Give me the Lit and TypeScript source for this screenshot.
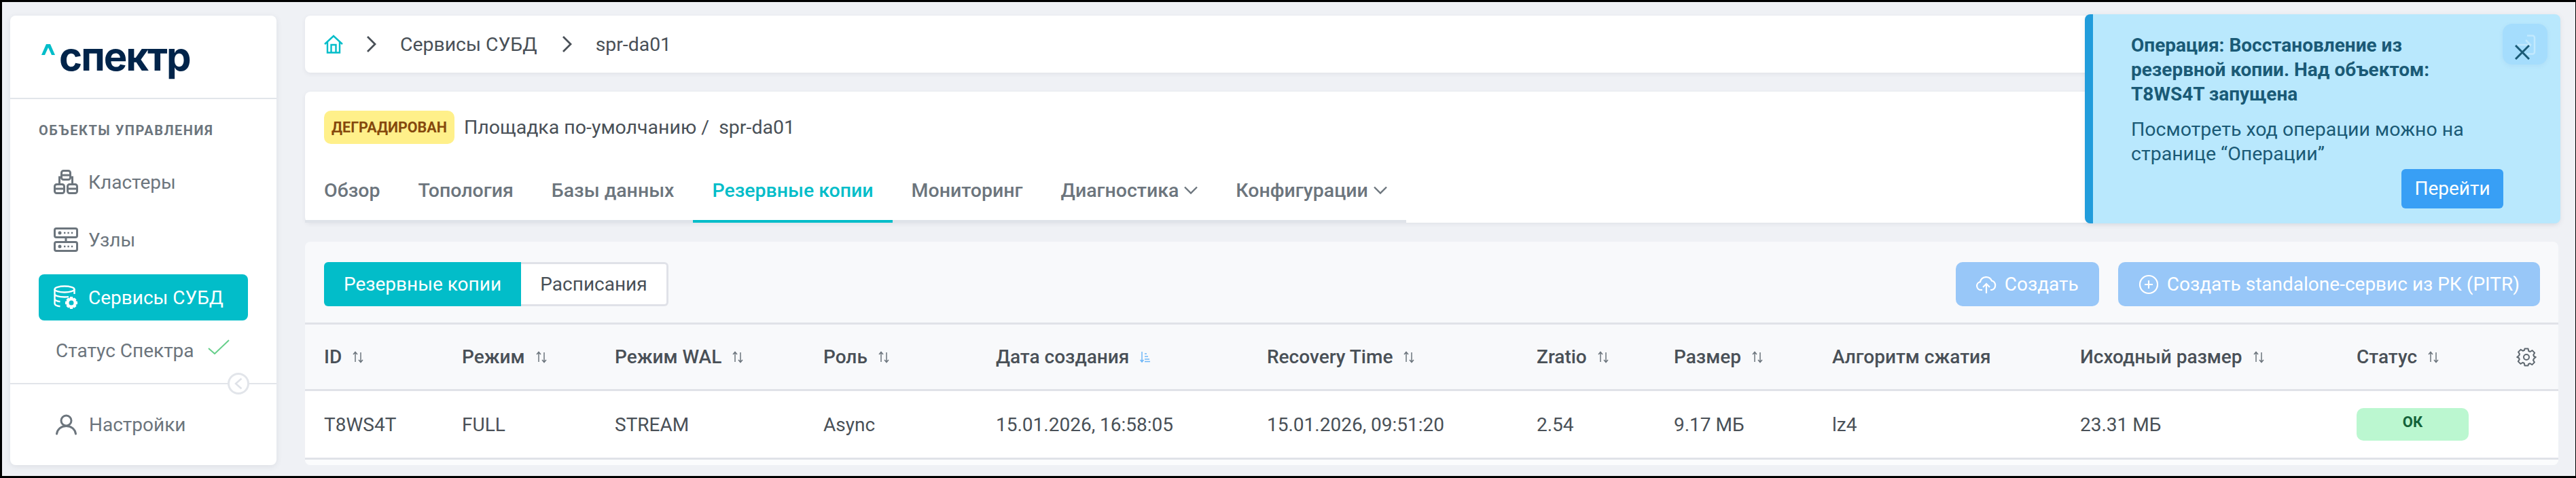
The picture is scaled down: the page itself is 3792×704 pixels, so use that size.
import { LitElement, css, html, svg } from 'lit'
import { customElement } from 'lit/decorators.js'

const sortIcon = (active = false) => html`
  <svg class="sort ${active ? 'active' : ''}" width="16" height="18" viewBox="0 0 16 18" fill="none" stroke="currentColor" stroke-width="1.5">
    ${active
      ? svg`<path d="M3 1v15M0.5 13l2.5 3 2.5-3"/><path d="M7 4h3M7 8h5M7 12h7M7 15.5h8"/>`
      : svg`<path d="M4 16V1.5M1 5l3-3.5L7 5"/><path d="M12 2v14.5M9 13l3 3.5 3-3.5"/>`}
  </svg>
`

const columns = [
  { title: 'ID', value: 'T8WS4T', sort: true },
  { title: 'Режим', value: 'FULL', sort: true },
  { title: 'Режим WAL', value: 'STREAM', sort: true },
  { title: 'Роль', value: 'Async', sort: true },
  { title: 'Дата создания', value: '15.01.2026, 16:58:05', sort: true, active: true },
  { title: 'Recovery Time', value: '15.01.2026, 09:51:20', sort: true },
  { title: 'Zratio', value: '2.54', sort: true },
  { title: 'Размер', value: '9.17 МБ', sort: true },
  { title: 'Алгоритм сжатия', value: 'lz4', sort: false },
  { title: 'Исходный размер', value: '23.31 МБ', sort: true },
]

const tabs = [
  { label: 'Обзор' },
  { label: 'Топология' },
  { label: 'Базы данных' },
  { label: 'Резервные копии', active: true },
  { label: 'Мониторинг' },
  { label: 'Диагностика', menu: true },
  { label: 'Конфигурации', menu: true },
]

const chevron = html`
  <svg width="20" height="12" viewBox="0 0 20 12" fill="none" stroke="currentColor" stroke-width="2.4"><path d="M1 1.5l9 9 9-9"/></svg>
`

const clusterIcon = html`
  <svg class="nav-icon" width="36" height="36" viewBox="0 0 36 36" fill="none" stroke="currentColor" stroke-width="3">
    <rect x="11.5" y="1.5" width="13" height="13" rx="3"/><path d="M11.5 8h13"/>
    <path d="M11.5 11H8.5v11M24.5 11h3v11"/>
    <rect x="1.5" y="21.5" width="14" height="13" rx="3"/><path d="M1.5 28h14"/>
    <rect x="20.5" y="21.5" width="14" height="13" rx="3"/><path d="M20.5 28h14"/>
  </svg>
`
const nodeIcon = html`
  <svg class="nav-icon" width="36" height="36" viewBox="0 0 36 36" fill="none" stroke="currentColor" stroke-width="3">
    <rect x="1.5" y="1.5" width="33" height="13" rx="2.5"/><rect x="1.5" y="21.5" width="33" height="13" rx="2.5"/>
    <path d="M18 14.5v7"/>
    <circle cx="9" cy="8" r="2.5" fill="currentColor" stroke="none"/><circle cx="9" cy="28" r="2.5" fill="currentColor" stroke="none"/>
    <path d="M15 8h14M15 28h14" stroke-width="2.4" stroke-dasharray="2.4 3"/>
  </svg>
`
const dbIcon = html`
  <svg class="nav-icon" width="36" height="36" viewBox="0 0 36 36" fill="none" stroke="currentColor" stroke-width="2.4">
    <ellipse cx="16" cy="6" rx="14.5" ry="4.5"/>
    <path d="M1.5 6v21c0 2 3 3.6 8 4.2M30.5 6v7M1.5 13c0 2.500 6 4.500 14.500 4.500 2 0 4-.1 6-.4M1.500 20c0 2 3 3.600 8 4.200"/>
    <g fill="currentColor" stroke="none">
      <path fill-rule="evenodd" d="M24 17h4l.7 2.400 2-.9 2.800 2.800-1 2 2.500.7v4l-2.500.7 1 2-2.800 2.800-2-1-.7 2.500h-4l-.7-2.500-2 1-2.800-2.800 1-2-2.500-.7v-4l2.500-.7-1-2 2.800-2.800 2 .9zM26 22.500a3.500 3.500 0 100 7 3.500 3.500 0 000-7z"/>
    </g>
  </svg>
`
const userIcon = html`
  <svg width="31" height="31" viewBox="0 0 31 31" fill="none" stroke="currentColor" stroke-width="3" stroke-linecap="round">
    <circle cx="15.500" cy="9.500" r="7.500"/><path d="M1.500 29c1-7 6.500-11.500 14-11.500S28.500 22 29.500 29"/>
  </svg>
`
const gearIcon = html`
  <svg width="30" height="30" viewBox="0 0 24 24" fill="none" stroke="#5f6870" stroke-width="1.600" stroke-linejoin="round">
    <path d="M10 2h4l.6 2.800 1.800.8 2.500-1.500 2.800 2.800-1.500 2.500.8 1.800L23 12l-2.200 1.800-.8 1.800 1.500 2.500-2.800 2.800-2.500-1.500-1.800.8L14 22h-4l-.6-2.800-1.800-.8-2.500 1.500-2.800-2.800 1.500-2.500-.8-1.800L1 12l2.200-1.800.8-1.800-1.500-2.500 2.800-2.800 2.500 1.500 1.800-.8z"/>
    <circle cx="12" cy="12" r="3.200"/>
  </svg>
`

@customElement('app-root')
export class AppRoot extends LitElement {
  private _renderSidebar() {
    return html`
      <aside class="sidebar">
        <div class="logo">
          <svg class="caret" width="20" height="16" viewBox="0 0 20 16"><path fill="#02bdc9" d="M7 0h6l7 16h-5l-5-11-5 11H0z"/></svg>
          <span class="logo-text">спектр</span>
        </div>
        <div class="nav">
          <div class="nav-title">ОБЪЕКТЫ УПРАВЛЕНИЯ</div>
          <div class="nav-item">${clusterIcon}<span>Кластеры</span></div>
          <div class="nav-item">${nodeIcon}<span>Узлы</span></div>
          <div class="nav-item active">${dbIcon}<span>Сервисы СУБД</span></div>
          <div class="status">
            <span>Статус Спектра</span>
            <svg width="32" height="22" viewBox="0 0 32 22" fill="none" stroke="#66cf8a" stroke-width="2"><path d="M1 13l9 8L31 1"/></svg>
          </div>
        </div>
        <div class="settings">
          <button class="collapse">
            <svg width="12" height="18" viewBox="0 0 12 18" fill="none" stroke="#dfe2e8" stroke-width="2.500"><path d="M10.500 1.500L2 9l8.500 7.500"/></svg>
          </button>
          <span class="user-icon">${userIcon}</span>
          <span>Настройки</span>
        </div>
      </aside>
    `
  }

  private _renderToast() {
    return html`
      <div class="toast">
        <div class="toast-title">Операция: Восстановление из резервной копии. Над объектом: T8WS4T запущена</div>
        <div class="toast-body">Посмотреть ход операции можно на странице “Операции”</div>
        <div class="toast-actions"><button class="go">Перейти</button></div>
        <div class="close">
          <svg class="ghost" width="28" height="30" viewBox="0 0 28 30" fill="none" stroke="#c2e9fe" stroke-width="2.500"><path d="M15 1.500h8a3 3 0 013 3v21a3 3 0 01-3 3h-8M1 15h19M13 8l7 7-7 7"/></svg>
          <svg class="x" width="22" height="22" viewBox="0 0 22 22" fill="none" stroke="#1a5a76" stroke-width="3"><path d="M1 1l20 20M21 1L1 21"/></svg>
        </div>
      </div>
    `
  }

  private _renderTable() {
    return html`
      <div class="table">
        <div class="row head">
          ${columns.map(
            c => html`<div class="cell"><span>${c.title}</span>${c.sort ? sortIcon(c.active) : ''}</div>`,
          )}
          <div class="cell"><span>Статус</span>${sortIcon()}</div>
          <div class="cell gear">${gearIcon}</div>
        </div>
        <div class="row body">
          ${columns.map(c => html`<div class="cell">${c.value}</div>`)}
          <div class="cell"><span class="ok">ОК</span></div>
          <div class="cell"></div>
        </div>
      </div>
    `
  }

  render() {
    return html`
      <div class="frame">
        ${this._renderSidebar()}
        <main class="main">
          <div class="card crumbs">
            <svg class="home" width="28" height="28" viewBox="0 0 28 28" fill="none" stroke="#02bdc9" stroke-width="2.400">
              <path d="M1 14L14 2l13 12M5 11v15.500h18V11M10.500 26V15h7v11"/>
            </svg>
            <svg class="sep" width="16" height="24" viewBox="0 0 16 24" fill="none" stroke="#495057" stroke-width="2.800"><path d="M2 1l11 11L2 23"/></svg>
            <span>Сервисы СУБД</span>
            <svg class="sep" width="16" height="24" viewBox="0 0 16 24" fill="none" stroke="#495057" stroke-width="2.800"><path d="M2 1l11 11L2 23"/></svg>
            <span>spr-da01</span>
          </div>
          <div class="card object">
            <div class="object-head">
              <span class="badge">ДЕГРАДИРОВАН</span>
              <span class="path">Площадка по-умолчанию /&nbsp; spr-da01</span>
            </div>
            <nav class="tabs">
              ${tabs.map(
                t => html`<div class="tab ${t.active ? 'active' : ''}"><span>${t.label}</span>${t.menu ? chevron : ''}</div>`,
              )}
            </nav>
          </div>
          <div class="backups">
            <div class="toolbar">
              <div class="segments">
                <div class="segment on">Резервные копии</div>
                <div class="segment">Расписания</div>
              </div>
              <div class="actions">
                <button class="create">
                  <svg width="30" height="30" viewBox="0 0 30 30" fill="none" stroke="currentColor" stroke-width="2.200">
                    <path d="M9 23H7a6 6 0 01-1-11.900A9 9 0 0123 9.500 7 7 0 0123 23h-2M15 28V14M10 19l5-5 5 5"/>
                  </svg>
                  Создать
                </button>
                <button class="create">
                  <svg width="30" height="30" viewBox="0 0 30 30" fill="none" stroke="currentColor" stroke-width="2.200">
                    <circle cx="15" cy="15" r="13"/><path d="M15 9v12M9 15h12"/>
                  </svg>
                  Создать standalone-сервис из РК (PITR)
                </button>
              </div>
            </div>
            ${this._renderTable()}
          </div>
        </main>
        ${this._renderToast()}
      </div>
    `
  }

  static styles = css`
    :host {
      display: block;
      font-family: Roboto, 'Noto Sans', sans-serif;
      font-size: 28px;
      color: #495057;
    }

    * {
      box-sizing: border-box;
    }

    .frame {
      position: relative;
      display: flex;
      gap: 42px;
      width: 3792px;
      height: 704px;
      padding: 20px 25px 15px 12px;
      background: #eff1f5;
      border-style: solid;
      border-color: #000;
      border-width: 3px 1px 3px 3px;
      overflow: hidden;
    }

    .sidebar {
      flex: none;
      display: flex;
      flex-direction: column;
      width: 392px;
      height: 662px;
      background: #fff;
      border-radius: 8px;
      box-shadow: 0 2px 8px rgba(60, 70, 90, 0.1);
      color: #6c757d;
    }

    .logo {
      display: flex;
      align-items: flex-start;
      height: 123px;
      padding: 42px 0 0 46px;
      border-bottom: 2px solid #e2e5ea;
    }

    .caret {
      flex: none;
      margin-right: 6px;
    }

    .logo-text {
      margin-top: -8px;
      font-family: Inter, sans-serif;
      font-size: 58px;
      line-height: 52px;
      font-weight: 700;
      color: #01244a;
      letter-spacing: -2px;
    }

    .nav {
      flex: none;
      height: 420px;
      padding: 0 42px;
      border-bottom: 2px solid #e2e5ea;
    }

    .nav-title {
      height: 88px;
      padding-top: 33px;
      font-size: 20px;
      line-height: 26px;
      font-weight: 700;
      letter-spacing: 1.5px;
      color: #6c757d;
    }

    .nav-item {
      display: flex;
      align-items: center;
      gap: 15px;
      height: 68px;
      margin-bottom: 17px;
      padding-left: 22px;
      border-radius: 8px;
    }

    .nav-item.active {
      margin-bottom: 0;
      background: #02bdc9;
      color: #fff;
    }

    .status {
      display: flex;
      align-items: flex-start;
      gap: 20px;
      height: 89px;
      padding: 28px 0 0 25px;
      line-height: 34px;
    }

    .settings {
      position: relative;
      display: flex;
      align-items: center;
      flex: 1;
      padding-left: 67px;
    }

    .user-icon {
      display: flex;
      margin-right: 18px;
    }

    .collapse {
      position: absolute;
      left: 320px;
      top: -17px;
      display: flex;
      align-items: center;
      justify-content: center;
      width: 32px;
      height: 32px;
      padding: 0;
      background: #fff;
      border: 3px solid #e2e5ea;
      border-radius: 50%;
    }

    .main {
      flex: none;
      display: flex;
      flex-direction: column;
      gap: 28px;
      width: 3317px;
    }

    .card {
      background: #fff;
      border-radius: 8px;
      box-shadow: 0 2px 6px rgba(60, 70, 90, 0.08);
    }

    .crumbs {
      display: flex;
      align-items: center;
      height: 84px;
      padding-left: 28px;
      font-size: 28.4px;
    }

    .home {
      margin-right: 34px;
    }

    .sep {
      margin-right: 34px;
    }

    .crumbs span {
      margin-right: 36px;
    }

    .object {
      height: 193px;
    }

    .object-head {
      display: flex;
      align-items: center;
      gap: 14px;
      height: 105px;
      padding: 28px 0 28px 28px;
    }

    .path {
      font-size: 28.5px;
    }

    .badge {
      display: flex;
      align-items: center;
      justify-content: center;
      width: 192px;
      height: 49px;
      background: #fff08a;
      border-radius: 10px;
      font-size: 21.5px;
      font-weight: 700;
      color: #85490d;
    }

    .tabs {
      display: inline-flex;
      height: 88px;
      border-bottom: 4px solid #dfe3e9;
    }

    .tab {
      display: flex;
      align-items: center;
      gap: 8px;
      height: 88px;
      padding: 0 28px 8px;
      font-size: 28.5px;
      font-weight: 500;
      color: #6c757d;
    }

    .tab.active {
      color: #02bdc9;
      border-bottom: 4px solid #02bdc9;
      padding-bottom: 4px;
    }

    .backups {
      height: 329px;
      background: #f8f9fb;
      border-radius: 8px;
      overflow: hidden;
    }

    .toolbar {
      display: flex;
      align-items: center;
      justify-content: space-between;
      height: 122px;
      padding: 6px 27px 0 28px;
      border-bottom: 3px solid #e0e2e8;
    }

    .segments {
      display: flex;
      height: 65px;
    }

    .segment {
      display: flex;
      align-items: center;
      justify-content: center;
      width: 217px;
      background: #fff;
      border: 3px solid #e0e2e8;
      border-left: 0;
      border-radius: 0 6px 6px 0;
    }

    .segment.on {
      width: 290px;
      background: #02bdc9;
      border: 0;
      border-radius: 6px 0 0 6px;
      color: #fff;
    }

    .actions {
      display: flex;
      gap: 28px;
    }

    .create {
      display: flex;
      align-items: center;
      justify-content: center;
      gap: 12px;
      height: 65px;
      padding: 0 30px;
      background: #98c7f8;
      border: 0;
      border-radius: 10px;
      color: #fff;
      font: inherit;
    }

    .table {
      background: #fbfcfd;
      height: 207px;
    }

    .row {
      display: grid;
      grid-template-columns: 203px 225px 307px 254px 399px 397px 202px 233px 365px 407px 235px 32px;
      align-items: center;
      padding-left: 28px;
    }

    .row.head {
      height: 98px;
      background: #f8f9fb;
      border-bottom: 3px solid #e0e2e8;
      font-weight: 500;
    }

    .row.body {
      height: 101px;
      background: #fff;
      border-bottom: 3px solid #e0e2e8;
    }

    .cell {
      display: flex;
      align-items: center;
      gap: 16px;
      white-space: nowrap;
    }

    .sort {
      color: #6c757d;
      flex: none;
    }

    .sort.active {
      color: #6db6f7;
    }

    .ok {
      display: flex;
      align-items: flex-start;
      justify-content: center;
      width: 165px;
      height: 48px;
      padding-top: 7px;
      background: #bbf7d0;
      border-radius: 10px;
      font-size: 22px;
      line-height: 28px;
      font-weight: 700;
      color: #14633a;
    }

    .toast {
      position: absolute;
      left: 3066px;
      top: 18px;
      width: 700px;
      height: 308px;
      padding: 28px 56px 0 56px;
      background: #b9e8fd;
      border-left: 12px solid #219cdb;
      border-radius: 8px;
      box-shadow: 0 2px 8px rgba(60, 70, 90, 0.08);
      color: #1a5a76;
      line-height: 36px;
    }

    .toast-title {
      width: 480px;
      font-weight: 700;
    }

    .toast-body {
      width: 520px;
      margin-top: 16px;
      font-size: 28.5px;
    }

    .toast-actions {
      display: flex;
      justify-content: flex-end;
      padding-right: 28px;
      margin-top: 4px;
    }

    .go {
      width: 150px;
      height: 58px;
      padding: 0;
      background: #389ff5;
      border: 0;
      border-radius: 6px;
      color: #fff;
      font: inherit;
    }

    .close {
      position: absolute;
      right: 19px;
      top: 14px;
      width: 66px;
      height: 60px;
      background: #a5ddfd;
      border-radius: 14px;
      box-shadow: 0 2px 6px rgba(60, 120, 180, 0.08);
    }

    .ghost {
      position: absolute;
      left: 21px;
      top: 16px;
    }

    .x {
      position: absolute;
      left: 18px;
      top: 31px;
    }
  `
}
